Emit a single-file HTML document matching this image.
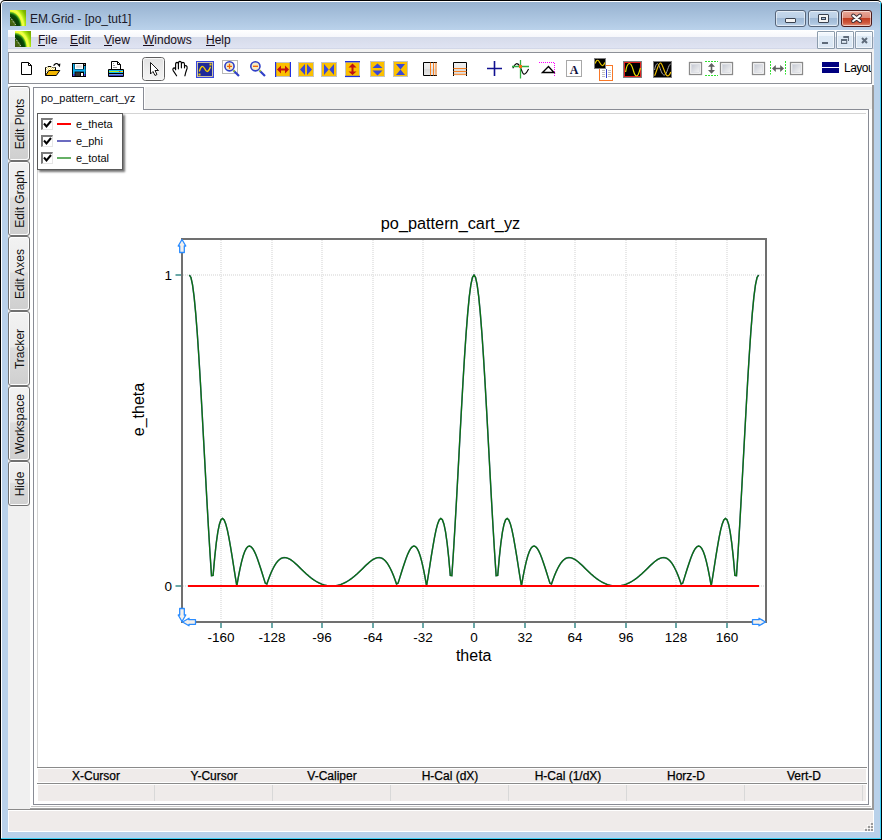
<!DOCTYPE html><html><head><meta charset="utf-8"><style>
html,body{margin:0;padding:0;background:#fff}
body{width:882px;height:840px;position:relative;overflow:hidden;font-family:"Liberation Sans",sans-serif;}
.a{position:absolute}
.t{position:absolute;white-space:pre;line-height:1;color:#000}
svg{position:absolute;overflow:visible}
</style></head><body>
<div style="position:absolute;left:0px;top:0px;width:882px;height:840px;background:#000;border-radius:5px 5px 0 0"></div>
<div style="position:absolute;left:1px;top:1px;width:880px;height:838px;background:#fff;border-radius:4px 4px 0 0"></div>
<div style="position:absolute;left:2px;top:2px;width:878px;height:836px;background:#b9d1ea;border-radius:3px 3px 0 0"></div>
<div style="position:absolute;left:880px;top:2px;width:1px;height:837px;background:#3fd0f5"></div>
<div style="position:absolute;left:1px;top:838px;width:880px;height:1px;background:#3fd0f5"></div>
<div style="position:absolute;left:2px;top:2px;width:878px;height:28px;background:linear-gradient(#97b2d0,#bad2eb);border-radius:3px 3px 0 0"></div>
<svg width="16" height="16" viewBox="0 0 16 16" style="position:absolute;left:10px;top:10px">
<defs><radialGradient id="g1" cx="0" cy="17" r="22" gradientUnits="userSpaceOnUse" gradientTransform="translate(0,17) scale(1,1.3) translate(0,-17)">
<stop offset="0" stop-color="#3a4a18"/><stop offset="0.22" stop-color="#4a7010"/><stop offset="0.32" stop-color="#0a3a05"/><stop offset="0.44" stop-color="#0a5008"/>
<stop offset="0.5" stop-color="#50b020"/><stop offset="0.55" stop-color="#f4ff30"/><stop offset="0.62" stop-color="#f0ff50"/><stop offset="0.7" stop-color="#b0e810"/><stop offset="0.82" stop-color="#80b800"/><stop offset="1" stop-color="#70a000"/></radialGradient></defs>
<rect width="16" height="16" fill="url(#g1)"/><path d="M0.5 7.5 L6 15.5" stroke="#e8e8e8" stroke-width="1" stroke-dasharray="1 1"/></svg>
<div class="t" style="left:30px;top:13px;font-size:12px;color:#1a1a2a">EM.Grid - [po_tut1]</div>
<div style="position:absolute;left:775px;top:10px;width:31px;height:17px;background:linear-gradient(#c6d8ec 0%,#bcd0e6 45%,#9fb9d6 50%,#abc4de 80%,#c2d6ec 100%);border:1px solid #56657a;border-radius:3px;box-sizing:border-box;box-shadow:inset 0 0 0 1px rgba(255,255,255,0.55)"></div>
<div style="position:absolute;left:808px;top:10px;width:31px;height:17px;background:linear-gradient(#c6d8ec 0%,#bcd0e6 45%,#9fb9d6 50%,#abc4de 80%,#c2d6ec 100%);border:1px solid #56657a;border-radius:3px;box-sizing:border-box;box-shadow:inset 0 0 0 1px rgba(255,255,255,0.55)"></div>
<div style="position:absolute;left:841px;top:10px;width:31px;height:17px;background:linear-gradient(#e9a99a 0%,#dd8a78 45%,#c13e22 50%,#cf5a3e 80%,#e49a84 100%);border:1px solid #4a1a1a;border-radius:3px;box-sizing:border-box;box-shadow:inset 0 0 0 1px rgba(255,255,255,0.55)"></div>
<div style="position:absolute;left:785px;top:18px;width:11px;height:5px;background:#f4f4f4;border:1px solid #3a4250;border-radius:1px;box-sizing:border-box"></div>
<div style="position:absolute;left:818px;top:14px;width:11px;height:9px;background:#f4f4f4;border:1px solid #3a4250;border-radius:1px;box-sizing:border-box"></div>
<div style="position:absolute;left:821px;top:17px;width:5px;height:3px;background:#a9c0da;border:1px solid #3a4250;box-sizing:border-box"></div>
<svg width="14" height="12" style="left:850px;top:13px" viewBox="0 0 14 12">
<path d="M3.2 2.6 L10 8 M10 2.6 L3.2 8" stroke="#3a2a30" stroke-width="4" stroke-linecap="round"/>
<path d="M3.2 2.6 L10 8 M10 2.6 L3.2 8" stroke="#fafafa" stroke-width="2.2" stroke-linecap="round"/></svg>
<div style="position:absolute;left:8px;top:30px;width:866px;height:19px;background:linear-gradient(#ffffff 0%,#f6f7fb 36%,#d6dbea 38%,#dfe3f2 95%,#c5cbdd 100%)"></div>
<div style="position:absolute;left:8px;top:49px;width:866px;height:36px;background:#f2f2f2"></div>
<svg width="16" height="16" viewBox="0 0 16 16" style="position:absolute;left:15px;top:31px">
<defs><radialGradient id="g2" cx="0" cy="17" r="22" gradientUnits="userSpaceOnUse" gradientTransform="translate(0,17) scale(1,1.3) translate(0,-17)">
<stop offset="0" stop-color="#3a4a18"/><stop offset="0.22" stop-color="#4a7010"/><stop offset="0.32" stop-color="#0a3a05"/><stop offset="0.44" stop-color="#0a5008"/>
<stop offset="0.5" stop-color="#50b020"/><stop offset="0.55" stop-color="#f4ff30"/><stop offset="0.62" stop-color="#f0ff50"/><stop offset="0.7" stop-color="#b0e810"/><stop offset="0.82" stop-color="#80b800"/><stop offset="1" stop-color="#70a000"/></radialGradient></defs>
<rect width="16" height="16" fill="url(#g2)"/><path d="M0.5 7.5 L6 15.5" stroke="#e8e8e8" stroke-width="1" stroke-dasharray="1 1"/></svg>
<div class="t" style="left:38px;top:34px;font-size:12px;color:#1a1020">File</div>
<div style="position:absolute;left:38px;top:45px;width:7px;height:1px;background:#1a1020"></div>
<div class="t" style="left:70px;top:34px;font-size:12px;color:#1a1020">Edit</div>
<div style="position:absolute;left:70px;top:45px;width:8px;height:1px;background:#1a1020"></div>
<div class="t" style="left:104px;top:34px;font-size:12px;color:#1a1020">View</div>
<div style="position:absolute;left:104px;top:45px;width:8px;height:1px;background:#1a1020"></div>
<div class="t" style="left:143px;top:34px;font-size:12px;color:#1a1020">Windows</div>
<div style="position:absolute;left:143px;top:45px;width:11px;height:1px;background:#1a1020"></div>
<div class="t" style="left:206px;top:34px;font-size:12px;color:#1a1020">Help</div>
<div style="position:absolute;left:206px;top:45px;width:9px;height:1px;background:#1a1020"></div>
<div style="position:absolute;left:817px;top:31px;width:18px;height:18px;box-sizing:border-box;border:1px solid #8c9cac;border-radius:1px;background:linear-gradient(#f4f9fe 0%,#eef5fc 22%,#dde9f5 25%,#dbe7f4 100%);box-shadow:inset 0 0 0 1px rgba(255,255,255,0.6)"></div>
<div style="position:absolute;left:836px;top:31px;width:18px;height:18px;box-sizing:border-box;border:1px solid #8c9cac;border-radius:1px;background:linear-gradient(#f4f9fe 0%,#eef5fc 22%,#dde9f5 25%,#dbe7f4 100%);box-shadow:inset 0 0 0 1px rgba(255,255,255,0.6)"></div>
<div style="position:absolute;left:855px;top:31px;width:18px;height:18px;box-sizing:border-box;border:1px solid #8c9cac;border-radius:1px;background:linear-gradient(#f4f9fe 0%,#eef5fc 22%,#dde9f5 25%,#dbe7f4 100%);box-shadow:inset 0 0 0 1px rgba(255,255,255,0.6)"></div>
<div style="position:absolute;left:822px;top:42px;width:6px;height:2px;background:#5f6b7a"></div>
<svg width="12" height="12" style="left:839px;top:34px" viewBox="0 0 12 12">
<rect x="4.3" y="2" width="5.7" height="2" fill="#5f6b7a"/><rect x="9" y="2" width="1" height="5" fill="#5f6b7a"/>
<rect x="2" y="5" width="6.2" height="5" fill="#5f6b7a"/><rect x="3" y="7" width="4.2" height="1.8" fill="#e4eef8"/></svg>
<svg width="12" height="12" style="left:858px;top:34px" viewBox="0 0 12 12">
<path d="M4 4 L9 9 M9 4 L4 9" stroke="#5f6b7a" stroke-width="2"/></svg>
<div style="position:absolute;left:8px;top:52px;width:864px;height:32px;background:#fff;border:1px solid #8d9097;box-sizing:border-box"></div>
<svg width="882" height="100" style="left:0;top:0" viewBox="0 0 882 100"><path d="M21.5 62.5 H28.5 L31.5 65.5 V74.5 H21.5 Z" fill="#fff" stroke="#000" stroke-width="1"/><path d="M28.5 62.5 V65.5 H31.5" fill="none" stroke="#000" stroke-width="1"/><defs><pattern id="chk" width="2" height="2" patternUnits="userSpaceOnUse"><rect width="2" height="2" fill="#f8e070"/><rect width="1" height="1" fill="#fff"/><rect x="1" y="1" width="1" height="1" fill="#fff"/></pattern></defs><path d="M45.5 75.5 V67.5 H47 L48 66.5 H51 L52 67.5 H55.5 V70.5" fill="url(#chk)" stroke="#000" stroke-width="1"/><path d="M46 67.5 H55 V70.5 H49 L46 75 Z" fill="url(#chk)"/><path d="M48.8 70.5 H59.8 L56.3 75.5 H45.5 Z" fill="#f0b400" stroke="#000" stroke-width="1" stroke-linejoin="miter"/><path d="M53.6 65.6 Q56 62 58.6 64.6" fill="none" stroke="#000" stroke-width="1.2"/><path d="M57.2 64.6 L60.4 63.6 L59.9 67.2 Z" fill="#000"/><rect x="72" y="63" width="14" height="14" fill="#000"/><rect x="73" y="64" width="1.6" height="10" fill="#10b0f0"/><rect x="84" y="66" width="1.4" height="8" fill="#10b0f0"/><rect x="73" y="69.4" width="12.4" height="2.2" fill="#10b0f0"/><rect x="75" y="64" width="8" height="5" fill="#fff"/><rect x="76.2" y="65.2" width="5.6" height="2.6" fill="#dcdcdc"/><rect x="75.4" y="72.3" width="4.6" height="3.6" fill="#343434"/><rect x="81" y="73" width="2" height="3" fill="#fff"/><rect x="73" y="74" width="1.6" height="2" fill="#5048e8"/><rect x="84" y="74" width="1.4" height="2" fill="#5048e8"/><rect x="84" y="64" width="1" height="1" fill="#909090"/><path d="M111.5 69.5 V61.5 H117.5 L120.5 64.5 V69.5" fill="#fff" stroke="#000" stroke-width="1"/><path d="M117.5 61.5 V64.5 H120.5" fill="none" stroke="#000" stroke-width="1"/><rect x="113" y="63" width="1" height="1" fill="#999"/><rect x="113" y="65" width="2" height="1" fill="#999"/><rect x="113" y="67" width="4" height="1" fill="#999"/><rect x="108" y="69" width="16" height="8" rx="1" fill="#000"/><rect x="109" y="70" width="14" height="1" fill="#10b8f0"/><rect x="109" y="71" width="14" height="1" fill="#b8e820"/><rect x="109" y="72" width="14" height="1" fill="#10b8f0"/><rect x="109" y="74" width="14" height="1" fill="#7098e0"/><rect x="109" y="75" width="14" height="1" fill="#3840c8"/><rect x="119" y="71" width="1" height="1" fill="#e02020"/><rect x="120" y="71" width="1" height="1" fill="#f08020"/><rect x="121" y="71" width="2" height="1" fill="#f8e000"/><defs><linearGradient id="pb" x1="0" y1="0" x2="0" y2="1"><stop offset="0" stop-color="#e0e0e0"/><stop offset="0.5" stop-color="#ececec"/><stop offset="1" stop-color="#f4f4f4"/></linearGradient></defs><rect x="142.5" y="57.5" width="22" height="23" rx="3" fill="url(#pb)" stroke="#5e5e5e" stroke-width="1"/><rect x="143.5" y="58.5" width="20" height="21" rx="2" fill="none" stroke="#f8f8f8" stroke-width="1"/><path d="M150.5 62.5 V74 L153 71.5 L155 75.5 L157 74.5 L155 70.5 L158.5 70.5 Z" fill="#fff" stroke="#000" stroke-width="0.9" stroke-linejoin="miter"/><path d="M176.6 75.8 L173.2 70.6 Q172.2 68.6 174.2 67.9 Q175.4 67.8 175.6 69.8 V64.6 Q175.6 62.4 177 62.4 Q178.3 62.4 178.4 64.2 V68.8 M178.4 64.2 Q178.4 61.4 179.8 61.4 Q181.3 61.4 181.4 63.2 V67.8 M181.4 63.6 Q181.6 62.4 183 62.4 Q184.5 62.5 184.5 64.2 V67.8 M184.5 66.2 Q185.1 65.3 186.3 65.8 Q187.4 66.6 187.1 68.2 L185.8 72.2 L184.9 75.8" fill="none" stroke="#000" stroke-width="1.15" stroke-linecap="round" stroke-linejoin="round"/><rect x="196.5" y="61.5" width="17" height="16" fill="#1f2a9a" stroke="#3848e0" stroke-width="1"/><rect x="197.5" y="62.5" width="15" height="14" fill="none" stroke="#f4e8a8" stroke-width="0.8"/><path d="M199.3 71.5 Q201.5 63 204.8 68.8 Q207.5 75 210.5 66.8" fill="none" stroke="#f8d000" stroke-width="1.3"/><rect x="209.5" y="63.5" width="2" height="2" fill="#f8d000"/><rect x="198.5" y="73.5" width="2" height="2" fill="#f8d000"/><rect x="222.5" y="60.5" width="15" height="13" fill="#fff" stroke="#b8b8b8" stroke-width="1"/><line x1="233.5" y1="70.5" x2="239" y2="76" stroke="#3040c8" stroke-width="2.2"/><line x1="233.5" y1="70.5" x2="234.5" y2="71.5" stroke="#a0d020" stroke-width="2"/><circle cx="229.5" cy="66.3" r="4.6" fill="#f6ecc4" stroke="#3040c8" stroke-width="1.6"/><path d="M227 66.3 H232 M229.5 63.8 V68.8" stroke="#f06000" stroke-width="1.3"/><line x1="259.5" y1="70.5" x2="265" y2="76" stroke="#3040c8" stroke-width="2.2"/><line x1="259.5" y1="70.5" x2="260.5" y2="71.5" stroke="#a0d020" stroke-width="2"/><circle cx="255.4" cy="66.3" r="4.6" fill="#f6ecc4" stroke="#3040c8" stroke-width="1.6"/><path d="M253 66.3 H258" stroke="#f06000" stroke-width="1.3"/><rect x="275.5" y="62.5" width="15" height="14" fill="#fbc000" stroke="#c4c4c4" stroke-width="1"/><rect x="275" y="62" width="1.2" height="15" fill="#2030e0"/><rect x="289.8" y="62" width="1.2" height="15" fill="#2030e0"/><path d="M277 69.5 L281 65.5 V68.5 H285 V65.5 L289 69.5 L285 73.5 V70.5 H281 V73.5 Z" fill="#c01010"/><rect x="298.5" y="62.5" width="15" height="14" fill="#fbc000" stroke="#c4c4c4" stroke-width="1"/><path d="M300 69.5 L305 64 V75 Z M312 69.5 L307 64 V75 Z" fill="#3848d8"/><rect x="321.5" y="62.5" width="15" height="14" fill="#fbc000" stroke="#c4c4c4" stroke-width="1"/><path d="M324 64 L328.7 69.5 L324 75 Z M334 64 L329.3 69.5 L334 75 Z" fill="#3848d8"/><rect x="345.5" y="62" width="14" height="14.5" fill="#fbc000" stroke="#c4c4c4" stroke-width="1"/><rect x="345" y="61" width="15" height="1.3" fill="#2030e0"/><rect x="345" y="75.8" width="15" height="1.3" fill="#2030e0"/><path d="M352.5 63.5 L356.5 67.5 H353.5 V71.5 H356.5 L352.5 75 L348.5 71.5 H351.5 V67.5 H348.5 Z" fill="#c01010"/><rect x="370.5" y="61.5" width="14" height="15" fill="#fbc000" stroke="#c4c4c4" stroke-width="1"/><path d="M377.5 63.5 L382.5 68 H372.5 Z M377.5 75.5 L382.5 70.5 H372.5 Z" fill="#3848d8"/><rect x="393.5" y="61.5" width="14" height="15" fill="#fbc000" stroke="#c4c4c4" stroke-width="1"/><path d="M396 64 H405 L400.5 69.5 Z M396 75 H405 L400.5 69.5 Z" fill="#3848d8"/><defs><linearGradient id="cg" x1="0" y1="0" x2="0" y2="1"><stop offset="0" stop-color="#f2f2f2"/><stop offset="0.5" stop-color="#e6e6e6"/><stop offset="0.55" stop-color="#d8d8d8"/><stop offset="1" stop-color="#e8e8e8"/></linearGradient><linearGradient id="bg2" x1="0" y1="0" x2="1" y2="1"><stop offset="0" stop-color="#c4c8d2"/><stop offset="1" stop-color="#f4f4f4"/></linearGradient></defs><rect x="423.5" y="62.5" width="13" height="13" fill="url(#cg)"/><path d="M437 62.5 H423.5 V75.5 H437" fill="none" stroke="#000" stroke-width="1"/><path d="M430.5 62.5 V75.5 M433.5 62.5 V75.5 M436 62.5 V75.5" stroke="#f88020" stroke-width="1"/><rect x="453.5" y="62.5" width="13" height="13" fill="url(#cg)"/><path d="M453.5 76 V62.5 H466.5 V76" fill="none" stroke="#000" stroke-width="1"/><path d="M453.5 68.5 H466.5 M453.5 71.5 H466.5 M453.5 74.3 H466.5" stroke="#f88020" stroke-width="1"/><path d="M487 68.5 H502 M494.5 61 V76" stroke="#101090" stroke-width="1.6"/><path d="M512.8 68.2 Q516.5 60 520 66.5 Q521.5 70 522.5 72.5 Q524.5 77 528.6 69" fill="none" stroke="#000" stroke-width="1.1"/><path d="M512 66.5 H529 M520.5 60 V78.5" stroke="#30b040" stroke-width="1.3"/><rect x="519" y="65" width="3" height="3" fill="#f07010"/><path d="M539 62.5 H554.5 V77" fill="none" stroke="#ff00ff" stroke-width="1" stroke-dasharray="1 1"/><path d="M542.5 72.5 L548.5 66.5 L554 72.5 Z" fill="none" stroke="#000" stroke-width="1.4" stroke-linejoin="miter"/><rect x="566.5" y="60.5" width="15" height="16" fill="#fff" stroke="#a8a8a8" stroke-width="1"/><text x="574" y="73.5" font-family="Liberation Serif" font-weight="bold" font-size="12" text-anchor="middle" fill="#101040">A</text><rect x="599.5" y="65.5" width="13" height="15" fill="#fff" stroke="#f87828" stroke-width="1"/><path d="M602 70.5 H605 M602 72.5 H605 M602 74.5 H605 M602 76.5 H605 M608 70.5 H611 M608 72.5 H611 M608 74.5 H611 M608 76.5 H611" stroke="#b0b0b0" stroke-width="0.8"/><path d="M606.5 69 V78" stroke="#3040d0" stroke-width="1"/><rect x="594.5" y="58.5" width="11" height="10" fill="#000" stroke="#808080" stroke-width="1"/><path d="M595.3 63.5 C596 60.5 597.5 59.5 598.8 61 C600 63 601 66 602.5 65.8 C603.8 65.5 604.5 63.5 604.8 62.5" fill="none" stroke="#f0d000" stroke-width="1.1"/><rect x="623.5" y="61.5" width="18" height="16" fill="#000" stroke="#808080" stroke-width="1"/><rect x="624.5" y="62.5" width="16" height="14" fill="none" stroke="#e02020" stroke-width="1"/><path d="M625.6 72 C626.5 66 628 63.5 629.5 63.5 C631.5 63.5 632.5 68 633.5 71 C634.5 74.5 635.5 76 636.7 76 C638.5 76 639.5 71 640.4 68" fill="none" stroke="#f0e000" stroke-width="1.2"/><rect x="653.5" y="61.5" width="18" height="16" fill="#000" stroke="#808080" stroke-width="1"/><path d="M654.6 70 C655.8 63 657.6 62.5 659 65.5 C660.5 69 662 75.5 664.5 75 C667 74.5 668.5 64 670.6 64" fill="none" stroke="#a8a8a8" stroke-width="1"/><path d="M654.6 75.8 C656.5 72 658.5 62.5 660.5 63 C662.5 63.5 664.5 73 666.5 75.3 C668.5 77 670 74 670.8 72" fill="none" stroke="#f0c000" stroke-width="1.2"/><rect x="689.5" y="62.5" width="12" height="12" fill="#fff" stroke="#8a8a8a" stroke-width="1.3"/><rect x="691.5" y="64.5" width="8" height="8" fill="url(#bg2)" stroke="#d0d4dc" stroke-width="0.6"/><rect x="720.5" y="62.5" width="12" height="12" fill="#fff" stroke="#8a8a8a" stroke-width="1.3"/><rect x="722.5" y="64.5" width="8" height="8" fill="url(#bg2)" stroke="#d0d4dc" stroke-width="0.6"/><rect x="752.5" y="62.5" width="12" height="12" fill="#fff" stroke="#8a8a8a" stroke-width="1.3"/><rect x="754.5" y="64.5" width="8" height="8" fill="url(#bg2)" stroke="#d0d4dc" stroke-width="0.6"/><rect x="790.5" y="62.5" width="12" height="12" fill="#fff" stroke="#8a8a8a" stroke-width="1.3"/><rect x="792.5" y="64.5" width="8" height="8" fill="url(#bg2)" stroke="#d0d4dc" stroke-width="0.6"/><path d="M705 61.5 H718 M705 75.5 H718" stroke="#30e030" stroke-width="1" stroke-dasharray="2 1"/><path d="M711.5 63 L715 66.8 H712.3 V70 H715 L711.5 73.8 L708 70 H710.7 V66.8 H708 Z" fill="#606060"/><path d="M770.5 61 V74.5 M785.5 61 V74.5" stroke="#30e030" stroke-width="1" stroke-dasharray="2 1"/><path d="M772 68.5 L775.8 65 V67.7 H780.2 V65 L784 68.5 L780.2 72 V69.3 H775.8 V72 Z" fill="#606060"/><rect x="822" y="62" width="17" height="5" fill="#000080"/><rect x="822" y="68" width="17" height="5" fill="#000080"/><svg x="840" y="55" width="31" height="25" viewBox="840 55 31 25" style="overflow:hidden"><text x="844" y="72" font-size="12" letter-spacing="-0.5" fill="#000">Layout</text></svg></svg>
<div style="position:absolute;left:8px;top:84px;width:866px;height:726px;background:#fff"></div>
<div style="position:absolute;left:8px;top:86px;width:22px;height:723px;background:#f0f0f0"></div>
<div style="position:absolute;left:8px;top:809px;width:866px;height:1px;background:#8a8a8a"></div>
<div style="position:absolute;left:30px;top:808px;width:844px;height:1px;background:#a0a0a0"></div>
<div style="position:absolute;left:31px;top:806px;width:840px;height:1px;background:#c8c8c8"></div>
<div style="position:absolute;left:872px;top:85px;width:2px;height:725px;background:#9a9a9a"></div>
<div style="position:absolute;left:8px;top:810px;width:866px;height:22px;background:#efebea;border:1px solid #fff;box-sizing:border-box;border-right-width:1px"></div>
<div style="position:absolute;left:8px;top:86px;width:22px;height:75px;box-sizing:border-box;border:1px solid #707070;border-radius:3px;background:linear-gradient(#f2f2f2 0%,#ebebeb 47%,#dddddd 50%,#cfcfcf 100%);box-shadow:inset 1px 1px 0 #fff, inset -1px -1px 0 #fcfcfc"></div>
<div class="t" style="left:19.5px;top:123.5px;font-size:12px;transform:translate(-50%,-50%) rotate(-90deg);color:#111">Edit Plots</div>
<div style="position:absolute;left:8px;top:161px;width:22px;height:75px;box-sizing:border-box;border:1px solid #707070;border-radius:3px;background:linear-gradient(#f2f2f2 0%,#ebebeb 47%,#dddddd 50%,#cfcfcf 100%);box-shadow:inset 1px 1px 0 #fff, inset -1px -1px 0 #fcfcfc"></div>
<div class="t" style="left:19.5px;top:198.5px;font-size:12px;transform:translate(-50%,-50%) rotate(-90deg);color:#111">Edit Graph</div>
<div style="position:absolute;left:8px;top:236px;width:22px;height:75px;box-sizing:border-box;border:1px solid #707070;border-radius:3px;background:linear-gradient(#f2f2f2 0%,#ebebeb 47%,#dddddd 50%,#cfcfcf 100%);box-shadow:inset 1px 1px 0 #fff, inset -1px -1px 0 #fcfcfc"></div>
<div class="t" style="left:19.5px;top:273.5px;font-size:12px;transform:translate(-50%,-50%) rotate(-90deg);color:#111">Edit Axes</div>
<div style="position:absolute;left:8px;top:311px;width:22px;height:75px;box-sizing:border-box;border:1px solid #707070;border-radius:3px;background:linear-gradient(#f2f2f2 0%,#ebebeb 47%,#dddddd 50%,#cfcfcf 100%);box-shadow:inset 1px 1px 0 #fff, inset -1px -1px 0 #fcfcfc"></div>
<div class="t" style="left:19.5px;top:348.5px;font-size:12px;transform:translate(-50%,-50%) rotate(-90deg);color:#111">Tracker</div>
<div style="position:absolute;left:8px;top:386px;width:22px;height:75px;box-sizing:border-box;border:1px solid #707070;border-radius:3px;background:linear-gradient(#f2f2f2 0%,#ebebeb 47%,#dddddd 50%,#cfcfcf 100%);box-shadow:inset 1px 1px 0 #fff, inset -1px -1px 0 #fcfcfc"></div>
<div class="t" style="left:19.5px;top:423.5px;font-size:12px;transform:translate(-50%,-50%) rotate(-90deg);color:#111">Workspace</div>
<div style="position:absolute;left:8px;top:461px;width:22px;height:45px;box-sizing:border-box;border:1px solid #707070;border-radius:3px;background:linear-gradient(#f2f2f2 0%,#ebebeb 47%,#dddddd 50%,#cfcfcf 100%);box-shadow:inset 1px 1px 0 #fff, inset -1px -1px 0 #fcfcfc"></div>
<div class="t" style="left:19.5px;top:483.5px;font-size:12px;transform:translate(-50%,-50%) rotate(-90deg);color:#111">Hide</div>
<div style="position:absolute;left:145px;top:87px;width:727px;height:22px;background:#f0f0f0"></div>
<div style="position:absolute;left:33px;top:87px;width:111px;height:23px;background:#fff;border:1px solid #898c95;border-bottom:none;box-sizing:border-box"></div>
<div class="t" style="left:41px;top:93px;font-size:11px;color:#0a0a14">po_pattern_cart_yz</div>
<div style="position:absolute;left:143px;top:109px;width:726px;height:1px;background:#898c95"></div>
<div style="position:absolute;left:33px;top:109px;width:1px;height:696px;background:#898c95"></div>
<div style="position:absolute;left:868px;top:109px;width:1px;height:696px;background:#898c95"></div>
<div style="position:absolute;left:33px;top:804px;width:836px;height:1px;background:#898c95"></div>
<div style="position:absolute;left:37px;top:113px;width:829px;height:654px;background:#fff;border-left:1px solid #d4d4d4;border-top:1px solid #d4d4d4;box-sizing:border-box"></div>
<div style="position:absolute;left:37px;top:767px;width:830px;height:1px;background:#8a8a8a"></div>
<div style="position:absolute;left:38px;top:769px;width:828px;height:13px;background:#efebea"></div>
<div style="position:absolute;left:37px;top:783px;width:830px;height:1px;background:#8a8a8a"></div>
<div style="position:absolute;left:38px;top:785px;width:828px;height:16px;background:#efebea"></div>
<div class="t" style="left:96px;top:769.5px;font-size:12px;-webkit-text-stroke:0.25px #000;transform:translateX(-50%);color:#000">X-Cursor</div>
<div style="position:absolute;left:154px;top:785px;width:1px;height:16px;background:#d8d8d8"></div>
<div class="t" style="left:214px;top:769.5px;font-size:12px;-webkit-text-stroke:0.25px #000;transform:translateX(-50%);color:#000">Y-Cursor</div>
<div style="position:absolute;left:272px;top:785px;width:1px;height:16px;background:#d8d8d8"></div>
<div class="t" style="left:332px;top:769.5px;font-size:12px;-webkit-text-stroke:0.25px #000;transform:translateX(-50%);color:#000">V-Caliper</div>
<div style="position:absolute;left:390px;top:785px;width:1px;height:16px;background:#d8d8d8"></div>
<div class="t" style="left:450px;top:769.5px;font-size:12px;-webkit-text-stroke:0.25px #000;transform:translateX(-50%);color:#000">H-Cal (dX)</div>
<div style="position:absolute;left:508px;top:785px;width:1px;height:16px;background:#d8d8d8"></div>
<div class="t" style="left:568px;top:769.5px;font-size:12px;-webkit-text-stroke:0.25px #000;transform:translateX(-50%);color:#000">H-Cal (1/dX)</div>
<div style="position:absolute;left:626px;top:785px;width:1px;height:16px;background:#d8d8d8"></div>
<div class="t" style="left:686px;top:769.5px;font-size:12px;-webkit-text-stroke:0.25px #000;transform:translateX(-50%);color:#000">Horz-D</div>
<div style="position:absolute;left:744px;top:785px;width:1px;height:16px;background:#d8d8d8"></div>
<div class="t" style="left:804px;top:769.5px;font-size:12px;-webkit-text-stroke:0.25px #000;transform:translateX(-50%);color:#000">Vert-D</div>
<div style="position:absolute;left:862px;top:785px;width:1px;height:16px;background:#d8d8d8"></div>
<svg width="882" height="840" style="left:0;top:0" viewBox="0 0 882 840"><line x1="221" y1="240" x2="221" y2="620" stroke="#e8e8e8" stroke-width="2" stroke-dasharray="1 1"/><line x1="272" y1="240" x2="272" y2="620" stroke="#e8e8e8" stroke-width="2" stroke-dasharray="1 1"/><line x1="322" y1="240" x2="322" y2="620" stroke="#e8e8e8" stroke-width="2" stroke-dasharray="1 1"/><line x1="373" y1="240" x2="373" y2="620" stroke="#e8e8e8" stroke-width="2" stroke-dasharray="1 1"/><line x1="423" y1="240" x2="423" y2="620" stroke="#e8e8e8" stroke-width="2" stroke-dasharray="1 1"/><line x1="474" y1="240" x2="474" y2="620" stroke="#e8e8e8" stroke-width="2" stroke-dasharray="1 1"/><line x1="525" y1="240" x2="525" y2="620" stroke="#e8e8e8" stroke-width="2" stroke-dasharray="1 1"/><line x1="575" y1="240" x2="575" y2="620" stroke="#e8e8e8" stroke-width="2" stroke-dasharray="1 1"/><line x1="626" y1="240" x2="626" y2="620" stroke="#e8e8e8" stroke-width="2" stroke-dasharray="1 1"/><line x1="676" y1="240" x2="676" y2="620" stroke="#e8e8e8" stroke-width="2" stroke-dasharray="1 1"/><line x1="727" y1="240" x2="727" y2="620" stroke="#e8e8e8" stroke-width="2" stroke-dasharray="1 1"/><line x1="183" y1="586" x2="765" y2="586" stroke="#e8e8e8" stroke-width="2" stroke-dasharray="1 1"/><line x1="183" y1="275" x2="765" y2="275" stroke="#e8e8e8" stroke-width="2" stroke-dasharray="1 1"/><line x1="221" y1="623" x2="221" y2="628" stroke="#6aa8a8" stroke-width="2"/><text x="221" y="642" font-size="13.5" text-anchor="middle" fill="#000">-160</text><line x1="272" y1="623" x2="272" y2="628" stroke="#6aa8a8" stroke-width="2"/><text x="272" y="642" font-size="13.5" text-anchor="middle" fill="#000">-128</text><line x1="322" y1="623" x2="322" y2="628" stroke="#6aa8a8" stroke-width="2"/><text x="322" y="642" font-size="13.5" text-anchor="middle" fill="#000">-96</text><line x1="373" y1="623" x2="373" y2="628" stroke="#6aa8a8" stroke-width="2"/><text x="373" y="642" font-size="13.5" text-anchor="middle" fill="#000">-64</text><line x1="423" y1="623" x2="423" y2="628" stroke="#6aa8a8" stroke-width="2"/><text x="423" y="642" font-size="13.5" text-anchor="middle" fill="#000">-32</text><line x1="474" y1="623" x2="474" y2="628" stroke="#6aa8a8" stroke-width="2"/><text x="474" y="642" font-size="13.5" text-anchor="middle" fill="#000">0</text><line x1="525" y1="623" x2="525" y2="628" stroke="#6aa8a8" stroke-width="2"/><text x="525" y="642" font-size="13.5" text-anchor="middle" fill="#000">32</text><line x1="575" y1="623" x2="575" y2="628" stroke="#6aa8a8" stroke-width="2"/><text x="575" y="642" font-size="13.5" text-anchor="middle" fill="#000">64</text><line x1="626" y1="623" x2="626" y2="628" stroke="#6aa8a8" stroke-width="2"/><text x="626" y="642" font-size="13.5" text-anchor="middle" fill="#000">96</text><line x1="676" y1="623" x2="676" y2="628" stroke="#6aa8a8" stroke-width="2"/><text x="676" y="642" font-size="13.5" text-anchor="middle" fill="#000">128</text><line x1="727" y1="623" x2="727" y2="628" stroke="#6aa8a8" stroke-width="2"/><text x="727" y="642" font-size="13.5" text-anchor="middle" fill="#000">160</text><line x1="175.5" y1="275" x2="181" y2="275" stroke="#6aa8a8" stroke-width="2"/><text x="172" y="280.2" font-size="13.5" text-anchor="end" fill="#000">1</text><line x1="175.5" y1="586" x2="181" y2="586" stroke="#6aa8a8" stroke-width="2"/><text x="172" y="591.2" font-size="13.5" text-anchor="end" fill="#000">0</text><rect x="182" y="239" width="584" height="383" fill="none" stroke="#707070" stroke-width="2"/><polyline points="189.38,275.00 190.96,277.49 192.54,284.87 194.12,296.94 195.70,313.33 197.28,333.55 198.86,357.03 200.44,383.08 202.02,410.99 203.61,439.98 205.19,469.29 206.77,498.18 208.35,525.94 209.93,551.94 211.51,575.63 213.09,575.42 214.68,557.57 216.26,543.03 217.84,531.90 219.42,524.18 221.00,519.77 222.58,518.44 224.16,519.94 225.74,523.89 227.32,529.93 228.91,537.61 230.49,546.52 232.07,556.21 233.65,566.27 235.23,576.31 236.81,586.00 238.39,576.97 239.97,568.85 241.56,561.83 243.14,556.03 244.72,551.55 246.30,548.42 247.88,546.61 249.46,546.08 251.04,546.73 252.62,548.46 254.21,551.11 255.79,554.56 257.37,558.63 258.95,563.17 260.53,568.04 262.11,573.07 263.69,578.14 265.27,583.13 266.86,584.06 268.44,579.53 270.02,575.35 271.60,571.56 273.18,568.22 274.76,565.34 276.34,562.93 277.92,560.99 279.51,559.51 281.09,558.47 282.67,557.85 284.25,557.60 285.83,557.70 287.41,558.11 288.99,558.78 290.57,559.69 292.16,560.78 293.74,562.03 295.32,563.39 296.90,564.84 298.48,566.35 300.06,567.90 301.64,569.45 303.23,570.99 304.81,572.49 306.39,573.96 307.97,575.36 309.55,576.70 311.13,577.96 312.71,579.14 314.29,580.23 315.88,581.23 317.46,582.14 319.04,582.95 320.62,583.67 322.20,584.29 323.78,584.81 325.36,585.24 326.94,585.57 328.52,585.81 330.11,585.95 331.69,586.00 333.27,585.95 334.85,585.81 336.43,585.57 338.01,585.24 339.59,584.81 341.17,584.29 342.76,583.67 344.34,582.95 345.92,582.14 347.50,581.23 349.08,580.23 350.66,579.14 352.24,577.96 353.82,576.70 355.41,575.36 356.99,573.96 358.57,572.49 360.15,570.99 361.73,569.45 363.31,567.90 364.89,566.35 366.48,564.84 368.06,563.39 369.64,562.03 371.22,560.78 372.80,559.69 374.38,558.78 375.96,558.11 377.54,557.70 379.12,557.60 380.71,557.85 382.29,558.47 383.87,559.51 385.45,560.99 387.03,562.93 388.61,565.34 390.19,568.22 391.77,571.56 393.36,575.35 394.94,579.53 396.52,584.06 398.10,583.13 399.68,578.14 401.26,573.07 402.84,568.04 404.43,563.17 406.01,558.63 407.59,554.56 409.17,551.11 410.75,548.46 412.33,546.73 413.91,546.08 415.49,546.61 417.07,548.42 418.66,551.55 420.24,556.03 421.82,561.83 423.40,568.85 424.98,576.97 426.56,586.00 428.14,576.31 429.73,566.27 431.31,556.21 432.89,546.52 434.47,537.61 436.05,529.93 437.63,523.89 439.21,519.94 440.79,518.44 442.38,519.77 443.96,524.18 445.54,531.90 447.12,543.03 448.70,557.57 450.28,575.42 451.86,575.63 453.44,551.94 455.02,525.94 456.61,498.18 458.19,469.29 459.77,439.98 461.35,410.99 462.93,383.08 464.51,357.03 466.09,333.55 467.68,313.33 469.26,296.94 470.84,284.87 472.42,277.49 474.00,275.00 475.58,277.49 477.16,284.87 478.74,296.94 480.32,313.33 481.91,333.55 483.49,357.03 485.07,383.08 486.65,410.99 488.23,439.98 489.81,469.29 491.39,498.18 492.98,525.94 494.56,551.94 496.14,575.63 497.72,575.42 499.30,557.57 500.88,543.03 502.46,531.90 504.04,524.18 505.62,519.77 507.21,518.44 508.79,519.94 510.37,523.89 511.95,529.93 513.53,537.61 515.11,546.52 516.69,556.21 518.27,566.27 519.86,576.31 521.44,586.00 523.02,576.97 524.60,568.85 526.18,561.83 527.76,556.03 529.34,551.55 530.92,548.42 532.51,546.61 534.09,546.08 535.67,546.73 537.25,548.46 538.83,551.11 540.41,554.56 541.99,558.63 543.58,563.17 545.16,568.04 546.74,573.07 548.32,578.14 549.90,583.13 551.48,584.06 553.06,579.53 554.64,575.35 556.23,571.56 557.81,568.22 559.39,565.34 560.97,562.93 562.55,560.99 564.13,559.51 565.71,558.47 567.29,557.85 568.88,557.60 570.46,557.70 572.04,558.11 573.62,558.78 575.20,559.69 576.78,560.78 578.36,562.03 579.94,563.39 581.52,564.84 583.11,566.35 584.69,567.90 586.27,569.45 587.85,570.99 589.43,572.49 591.01,573.96 592.59,575.36 594.17,576.70 595.76,577.96 597.34,579.14 598.92,580.23 600.50,581.23 602.08,582.14 603.66,582.95 605.24,583.67 606.83,584.29 608.41,584.81 609.99,585.24 611.57,585.57 613.15,585.81 614.73,585.95 616.31,586.00 617.89,585.95 619.48,585.81 621.06,585.57 622.64,585.24 624.22,584.81 625.80,584.29 627.38,583.67 628.96,582.95 630.54,582.14 632.12,581.23 633.71,580.23 635.29,579.14 636.87,577.96 638.45,576.70 640.03,575.36 641.61,573.96 643.19,572.49 644.77,570.99 646.36,569.45 647.94,567.90 649.52,566.35 651.10,564.84 652.68,563.39 654.26,562.03 655.84,560.78 657.42,559.69 659.01,558.78 660.59,558.11 662.17,557.70 663.75,557.60 665.33,557.85 666.91,558.47 668.49,559.51 670.08,560.99 671.66,562.93 673.24,565.34 674.82,568.22 676.40,571.56 677.98,575.35 679.56,579.53 681.14,584.06 682.73,583.13 684.31,578.14 685.89,573.07 687.47,568.04 689.05,563.17 690.63,558.63 692.21,554.56 693.79,551.11 695.38,548.46 696.96,546.73 698.54,546.08 700.12,546.61 701.70,548.42 703.28,551.55 704.86,556.03 706.44,561.83 708.02,568.85 709.61,576.97 711.19,586.00 712.77,576.31 714.35,566.27 715.93,556.21 717.51,546.52 719.09,537.61 720.67,529.93 722.26,523.89 723.84,519.94 725.42,518.44 727.00,519.77 728.58,524.18 730.16,531.90 731.74,543.03 733.33,557.57 734.91,575.42 736.49,575.63 738.07,551.94 739.65,525.94 741.23,498.18 742.81,469.29 744.39,439.98 745.98,410.99 747.56,383.08 749.14,357.03 750.72,333.55 752.30,313.33 753.88,296.94 755.46,284.87 757.04,277.49 758.62,275.00" fill="none" stroke="#6b6bbd" stroke-width="1.5"/><polyline points="189.38,275.00 190.96,277.49 192.54,284.87 194.12,296.94 195.70,313.33 197.28,333.55 198.86,357.03 200.44,383.08 202.02,410.99 203.61,439.98 205.19,469.29 206.77,498.18 208.35,525.94 209.93,551.94 211.51,575.63 213.09,575.42 214.68,557.57 216.26,543.03 217.84,531.90 219.42,524.18 221.00,519.77 222.58,518.44 224.16,519.94 225.74,523.89 227.32,529.93 228.91,537.61 230.49,546.52 232.07,556.21 233.65,566.27 235.23,576.31 236.81,586.00 238.39,576.97 239.97,568.85 241.56,561.83 243.14,556.03 244.72,551.55 246.30,548.42 247.88,546.61 249.46,546.08 251.04,546.73 252.62,548.46 254.21,551.11 255.79,554.56 257.37,558.63 258.95,563.17 260.53,568.04 262.11,573.07 263.69,578.14 265.27,583.13 266.86,584.06 268.44,579.53 270.02,575.35 271.60,571.56 273.18,568.22 274.76,565.34 276.34,562.93 277.92,560.99 279.51,559.51 281.09,558.47 282.67,557.85 284.25,557.60 285.83,557.70 287.41,558.11 288.99,558.78 290.57,559.69 292.16,560.78 293.74,562.03 295.32,563.39 296.90,564.84 298.48,566.35 300.06,567.90 301.64,569.45 303.23,570.99 304.81,572.49 306.39,573.96 307.97,575.36 309.55,576.70 311.13,577.96 312.71,579.14 314.29,580.23 315.88,581.23 317.46,582.14 319.04,582.95 320.62,583.67 322.20,584.29 323.78,584.81 325.36,585.24 326.94,585.57 328.52,585.81 330.11,585.95 331.69,586.00 333.27,585.95 334.85,585.81 336.43,585.57 338.01,585.24 339.59,584.81 341.17,584.29 342.76,583.67 344.34,582.95 345.92,582.14 347.50,581.23 349.08,580.23 350.66,579.14 352.24,577.96 353.82,576.70 355.41,575.36 356.99,573.96 358.57,572.49 360.15,570.99 361.73,569.45 363.31,567.90 364.89,566.35 366.48,564.84 368.06,563.39 369.64,562.03 371.22,560.78 372.80,559.69 374.38,558.78 375.96,558.11 377.54,557.70 379.12,557.60 380.71,557.85 382.29,558.47 383.87,559.51 385.45,560.99 387.03,562.93 388.61,565.34 390.19,568.22 391.77,571.56 393.36,575.35 394.94,579.53 396.52,584.06 398.10,583.13 399.68,578.14 401.26,573.07 402.84,568.04 404.43,563.17 406.01,558.63 407.59,554.56 409.17,551.11 410.75,548.46 412.33,546.73 413.91,546.08 415.49,546.61 417.07,548.42 418.66,551.55 420.24,556.03 421.82,561.83 423.40,568.85 424.98,576.97 426.56,586.00 428.14,576.31 429.73,566.27 431.31,556.21 432.89,546.52 434.47,537.61 436.05,529.93 437.63,523.89 439.21,519.94 440.79,518.44 442.38,519.77 443.96,524.18 445.54,531.90 447.12,543.03 448.70,557.57 450.28,575.42 451.86,575.63 453.44,551.94 455.02,525.94 456.61,498.18 458.19,469.29 459.77,439.98 461.35,410.99 462.93,383.08 464.51,357.03 466.09,333.55 467.68,313.33 469.26,296.94 470.84,284.87 472.42,277.49 474.00,275.00 475.58,277.49 477.16,284.87 478.74,296.94 480.32,313.33 481.91,333.55 483.49,357.03 485.07,383.08 486.65,410.99 488.23,439.98 489.81,469.29 491.39,498.18 492.98,525.94 494.56,551.94 496.14,575.63 497.72,575.42 499.30,557.57 500.88,543.03 502.46,531.90 504.04,524.18 505.62,519.77 507.21,518.44 508.79,519.94 510.37,523.89 511.95,529.93 513.53,537.61 515.11,546.52 516.69,556.21 518.27,566.27 519.86,576.31 521.44,586.00 523.02,576.97 524.60,568.85 526.18,561.83 527.76,556.03 529.34,551.55 530.92,548.42 532.51,546.61 534.09,546.08 535.67,546.73 537.25,548.46 538.83,551.11 540.41,554.56 541.99,558.63 543.58,563.17 545.16,568.04 546.74,573.07 548.32,578.14 549.90,583.13 551.48,584.06 553.06,579.53 554.64,575.35 556.23,571.56 557.81,568.22 559.39,565.34 560.97,562.93 562.55,560.99 564.13,559.51 565.71,558.47 567.29,557.85 568.88,557.60 570.46,557.70 572.04,558.11 573.62,558.78 575.20,559.69 576.78,560.78 578.36,562.03 579.94,563.39 581.52,564.84 583.11,566.35 584.69,567.90 586.27,569.45 587.85,570.99 589.43,572.49 591.01,573.96 592.59,575.36 594.17,576.70 595.76,577.96 597.34,579.14 598.92,580.23 600.50,581.23 602.08,582.14 603.66,582.95 605.24,583.67 606.83,584.29 608.41,584.81 609.99,585.24 611.57,585.57 613.15,585.81 614.73,585.95 616.31,586.00 617.89,585.95 619.48,585.81 621.06,585.57 622.64,585.24 624.22,584.81 625.80,584.29 627.38,583.67 628.96,582.95 630.54,582.14 632.12,581.23 633.71,580.23 635.29,579.14 636.87,577.96 638.45,576.70 640.03,575.36 641.61,573.96 643.19,572.49 644.77,570.99 646.36,569.45 647.94,567.90 649.52,566.35 651.10,564.84 652.68,563.39 654.26,562.03 655.84,560.78 657.42,559.69 659.01,558.78 660.59,558.11 662.17,557.70 663.75,557.60 665.33,557.85 666.91,558.47 668.49,559.51 670.08,560.99 671.66,562.93 673.24,565.34 674.82,568.22 676.40,571.56 677.98,575.35 679.56,579.53 681.14,584.06 682.73,583.13 684.31,578.14 685.89,573.07 687.47,568.04 689.05,563.17 690.63,558.63 692.21,554.56 693.79,551.11 695.38,548.46 696.96,546.73 698.54,546.08 700.12,546.61 701.70,548.42 703.28,551.55 704.86,556.03 706.44,561.83 708.02,568.85 709.61,576.97 711.19,586.00 712.77,576.31 714.35,566.27 715.93,556.21 717.51,546.52 719.09,537.61 720.67,529.93 722.26,523.89 723.84,519.94 725.42,518.44 727.00,519.77 728.58,524.18 730.16,531.90 731.74,543.03 733.33,557.57 734.91,575.42 736.49,575.63 738.07,551.94 739.65,525.94 741.23,498.18 742.81,469.29 744.39,439.98 745.98,410.99 747.56,383.08 749.14,357.03 750.72,333.55 752.30,313.33 753.88,296.94 755.46,284.87 757.04,277.49 758.62,275.00" fill="none" stroke="#0a700f" stroke-width="1.35" stroke-linejoin="miter"/><line x1="188" y1="586" x2="759" y2="586" stroke="#ff0000" stroke-width="2"/><g transform="translate(182,239) rotate(0)"><path d="M0 0.5 L3.8 7 L2.3 7 L2.3 13.5 L-2.3 13.5 L-2.3 7 L-3.8 7 Z" fill="#f4f0ec" stroke="#2a8cff" stroke-width="1.3" stroke-linejoin="round"/></g><g transform="translate(182,622) rotate(180)"><path d="M0 0.5 L3.8 7 L2.3 7 L2.3 13.5 L-2.3 13.5 L-2.3 7 L-3.8 7 Z" fill="#f4f0ec" stroke="#2a8cff" stroke-width="1.3" stroke-linejoin="round"/></g><g transform="translate(182,622) rotate(-90)"><path d="M0 0.5 L3.8 7 L2.3 7 L2.3 13.5 L-2.3 13.5 L-2.3 7 L-3.8 7 Z" fill="#f4f0ec" stroke="#2a8cff" stroke-width="1.3" stroke-linejoin="round"/></g><g transform="translate(766,622) rotate(90)"><path d="M0 0.5 L3.8 7 L2.3 7 L2.3 13.5 L-2.3 13.5 L-2.3 7 L-3.8 7 Z" fill="#f4f0ec" stroke="#2a8cff" stroke-width="1.3" stroke-linejoin="round"/></g><text x="450.5" y="229" font-size="16.3" text-anchor="middle" fill="#000">po_pattern_cart_yz</text><text x="473.7" y="660.5" font-size="16" text-anchor="middle" fill="#000">theta</text><text transform="translate(143.5,409.5) rotate(-90)" x="0" y="0" font-size="16" text-anchor="middle" fill="#000">e_theta</text></svg>
<div style="position:absolute;left:37px;top:113px;width:86px;height:57px;background:#fff;border:1px solid #5a5a5a;box-sizing:border-box;box-shadow:2px 2px 2px rgba(0,0,0,0.55)"></div>
<div style="position:absolute;left:41px;top:118px;width:12px;height:12px;background:#fff;box-sizing:border-box;border-top:2px solid #7a7a7a;border-left:2px solid #7a7a7a;border-right:1px solid #e6e6e6;border-bottom:1px solid #e6e6e6"></div>
<svg width="9" height="8" style="left:43px;top:120px" viewBox="0 0 9 8"><path d="M1 3.5 L3.5 6.5 L8 1" fill="none" stroke="#000" stroke-width="2"/></svg>
<div style="position:absolute;left:57px;top:123px;width:14px;height:2px;background:#ff0000"></div>
<div class="t" style="left:76px;top:119px;font-size:11px;color:#0a0a0a">e_theta</div>
<div style="position:absolute;left:41px;top:135px;width:12px;height:12px;background:#fff;box-sizing:border-box;border-top:2px solid #7a7a7a;border-left:2px solid #7a7a7a;border-right:1px solid #e6e6e6;border-bottom:1px solid #e6e6e6"></div>
<svg width="9" height="8" style="left:43px;top:137px" viewBox="0 0 9 8"><path d="M1 3.5 L3.5 6.5 L8 1" fill="none" stroke="#000" stroke-width="2"/></svg>
<div style="position:absolute;left:57px;top:140px;width:14px;height:2px;background:#6b6bc0"></div>
<div class="t" style="left:76px;top:136px;font-size:11px;color:#0a0a0a">e_phi</div>
<div style="position:absolute;left:41px;top:152px;width:12px;height:12px;background:#fff;box-sizing:border-box;border-top:2px solid #7a7a7a;border-left:2px solid #7a7a7a;border-right:1px solid #e6e6e6;border-bottom:1px solid #e6e6e6"></div>
<svg width="9" height="8" style="left:43px;top:154px" viewBox="0 0 9 8"><path d="M1 3.5 L3.5 6.5 L8 1" fill="none" stroke="#000" stroke-width="2"/></svg>
<div style="position:absolute;left:57px;top:157px;width:14px;height:2px;background:#66b066"></div>
<div class="t" style="left:76px;top:153px;font-size:11px;color:#0a0a0a">e_total</div>
<svg width="12" height="12" style="left:862px;top:820px" viewBox="0 0 12 12"><rect x="9" y="3" width="2" height="2" fill="#9a9a9a"/><rect x="8" y="2" width="1" height="1" fill="#fff"/><rect x="6" y="6" width="2" height="2" fill="#9a9a9a"/><rect x="5" y="5" width="1" height="1" fill="#fff"/><rect x="9" y="6" width="2" height="2" fill="#9a9a9a"/><rect x="8" y="5" width="1" height="1" fill="#fff"/><rect x="3" y="9" width="2" height="2" fill="#9a9a9a"/><rect x="2" y="8" width="1" height="1" fill="#fff"/><rect x="6" y="9" width="2" height="2" fill="#9a9a9a"/><rect x="5" y="8" width="1" height="1" fill="#fff"/><rect x="9" y="9" width="2" height="2" fill="#9a9a9a"/><rect x="8" y="8" width="1" height="1" fill="#fff"/></svg>
</body></html>
